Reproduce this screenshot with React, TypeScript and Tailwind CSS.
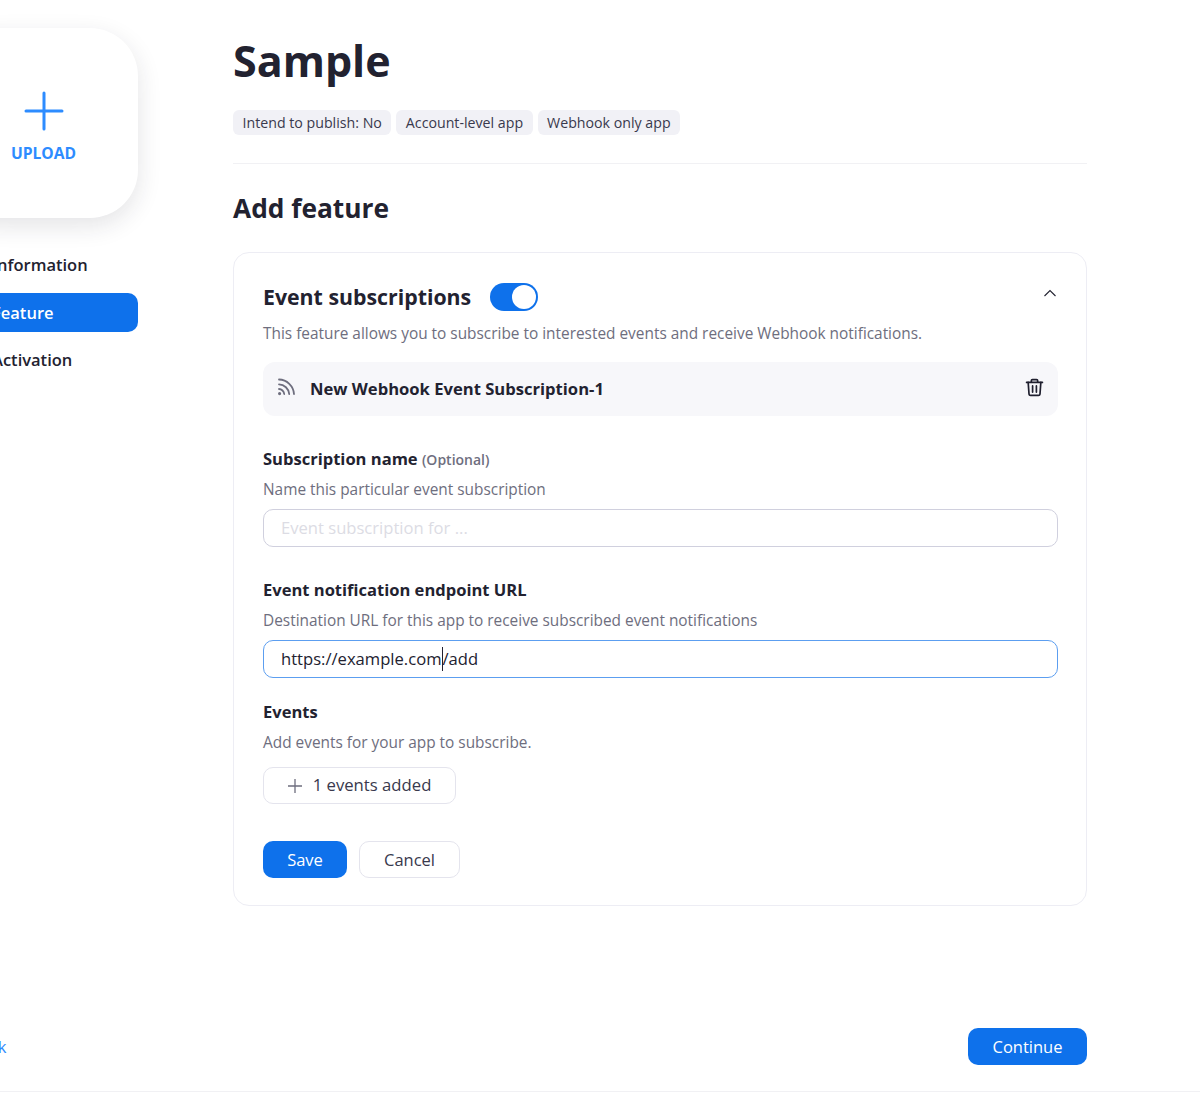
import React from "react";

const font = { fontFamily: '"Open Sans", sans-serif' };

function Rss() {
  return (
    <svg width="20" height="20" viewBox="0 0 20 20" fill="none" stroke="#6e6e7e" strokeWidth="1.800" strokeLinecap="round" className="-mt-[4px]">
      <path d="M2 2.500c7.800 0 14.600 6.600 15 14.500" />
      <path d="M2 7.300c5.200 0 9.900 4.600 10.200 9.700" />
      <path d="M2 12c2.600 0 5 2.300 5.200 5" />
      <circle cx="2.600" cy="16.600" r="0.700" fill="#6e6e7e" />
    </svg>
  );
}

function Trash() {
  return (
    <svg width="19" height="19" viewBox="0 0 18 18" fill="none" stroke="#1f1f2e" strokeWidth="1.600" strokeLinecap="round" strokeLinejoin="round">
      <path d="M1.500 4.200h15" />
      <path d="M6 4V2.600c0-.6.400-1 1-1h4c.6 0 1 .4 1 1V4" />
      <path d="M3 4.200l.8 11c.1.800.6 1.300 1.400 1.300h7.600c.8 0 1.300-.5 1.400-1.300l.8-11" />
      <path d="M7.200 7.500v5.800M10.800 7.500v5.800" />
    </svg>
  );
}

export default function App() {
  return (
    <div style={font} className="relative w-[1200px] h-[1095px] overflow-hidden bg-white flex text-[#222230]">
      <aside className="w-[190px] -ml-[52px] mr-[95px] shrink-0 pt-[28px] flex flex-col">
        <div className="h-[190px] rounded-[48px] bg-white shadow-[0_8px_24px_rgba(35,35,51,0.12)] flex flex-col items-center pt-[63px]">
          <svg width="40" height="40" viewBox="0 0 40 40" fill="none" stroke="#2d8cff" strokeWidth="3" strokeLinecap="round" className="ml-[1px]">
            <path d="M20 2v36M2 20h36" />
          </svg>
          <span className="ml-[1px] mt-[10px] text-[15.600px] leading-[24px] font-bold text-[#2d8cff]">UPLOAD</span>
        </div>
        <nav className="mt-[28px] flex flex-col gap-[9px] text-[16.500px] font-semibold">
          <div className="h-[38px] pl-[44px] flex items-center">Information</div>
          <div className="h-[39px] pl-[44px] pt-[1px] flex items-center rounded-[10px] bg-[#0e71eb] text-white">Feature</div>
          <div className="h-[38px] pl-[44px] flex items-center">Activation</div>
        </nav>
      </aside>

      <main className="w-[854px] shrink-0 flex flex-col">
        <h1 className="mt-[33px] text-[43px] leading-[56px] font-bold">Sample</h1>
        <div className="mt-[21px] flex gap-[5px]">
          {["Intend to publish: No", "Account-level app", "Webhook only app"].map((t) => (
            <span key={t} className="h-[25px] px-[9.500px] rounded-[6px] bg-[#f1f1f6] text-[14.200px] leading-[25px] text-[#39394d]">{t}</span>
          ))}
        </div>
        <div className="mt-[28px] h-px bg-[#f1f1f4]" />
        <h2 className="mt-[24px] text-[26.300px] leading-[40px] font-bold">Add feature</h2>

        <section className="mt-[24px] h-[654px] rounded-[16px] border border-[#ededf4] pl-[29px] pr-[28px] pt-[26px]">
          <div className="flex items-center h-[36px]">
            <span className="text-[21.300px] leading-[36px] font-bold w-[208px] whitespace-nowrap">Event subscriptions</span>
            <span className="ml-[19px] relative w-[48px] h-[28px] rounded-full bg-[#0e71eb]">
              <span className="absolute right-[2px] top-[2px] w-[24px] h-[24px] rounded-full bg-white" />
            </span>
            <svg className="ml-auto mb-[8px] mr-[1px]" width="14" height="8" viewBox="0 0 14 8" fill="none" stroke="#222230" strokeWidth="1.100">
              <path d="M1.500 7l5.500-5.500L12.500 7" />
            </svg>
          </div>
          <p className="mt-[7px] text-[15.400px] leading-[24px] text-[#6e6e7e]">This feature allows you to subscribe to interested events and receive Webhook notifications.</p>

          <div className="mt-[16px] h-[54px] rounded-[12px] bg-[#f7f7fa] flex items-center pl-[14px] pr-[14px]">
            <Rss />
            <span className="ml-[13px] text-[16.600px] font-bold">New Webhook Event Subscription-1</span>
            <span className="ml-auto flex -mt-[4px]"><Trash /></span>
          </div>

          <div className="mt-[31px] text-[16.550px] leading-[24px] font-bold">
            Subscription name <span className="text-[14px] font-semibold text-[#6e6e7e]">(Optional)</span>
          </div>
          <p className="mt-[6px] text-[15.400px] leading-[24px] text-[#6e6e7e]">Name this particular event subscription</p>
          <input
            readOnly
            placeholder="Event subscription for ..."
            className="mt-[7px] block w-full h-[38px] rounded-[10px] border border-[#d0d0de] px-[17px] pb-[2px] text-[16.600px] outline-none placeholder:text-[#dcdce4]"
          />

          <div className="mt-[31px] text-[16.550px] leading-[24px] font-bold">Event notification endpoint URL</div>
          <p className="mt-[7px] text-[15.400px] leading-[24px] text-[#6e6e7e]">Destination URL for this app to receive subscribed event notifications</p>
          <div className="mt-[7px] h-[38px] rounded-[10px] border border-[#5c9ef0] px-[17px] flex items-center text-[16.600px]">
            <span className="border-r border-[#222230] leading-[24px]">https://example.com</span>
            <span>/add</span>
          </div>

          <div className="mt-[22px] text-[16.500px] leading-[24px] font-bold">Events</div>
          <p className="mt-[7px] text-[15.400px] leading-[24px] text-[#6e6e7e]">Add events for your app to subscribe.</p>
          <button className="mt-[12px] w-[193px] h-[37px] pb-[2px] rounded-[10px] border border-[#e4e4ed] flex items-center justify-center gap-[11px] text-[16.700px] text-[#39394d]">
            <svg width="14" height="14" viewBox="0 0 14 14" fill="none" stroke="#6e6e7e" strokeWidth="1.300" className="mt-[2px]"><path d="M7 0v14M0 7h14" /></svg>
            1 events added
          </button>

          <div className="mt-[37px] flex gap-[12px]">
            <button className="w-[84px] h-[37px] pt-[1px] rounded-[10px] bg-[#0e71eb] text-white text-[16.500px]">Save</button>
            <button className="w-[101px] h-[37px] pt-[1px] rounded-[10px] border border-[#e4e4ed] text-[#39394d] text-[16.500px]">Cancel</button>
          </div>
        </section>

        <div className="mt-[122px] flex justify-end">
          <button className="w-[119px] h-[37px] pt-[1px] rounded-[10px] bg-[#0e71eb] text-white text-[16.500px]">Continue</button>
        </div>
      </main>

      <a className="absolute left-[-30px] top-[1035px] text-[16.500px] leading-[24px] text-[#2d8cff]">Back</a>
      <div className="absolute left-0 right-0 top-[1091px] h-px bg-[#f1f1f4]" />
    </div>
  );
}
